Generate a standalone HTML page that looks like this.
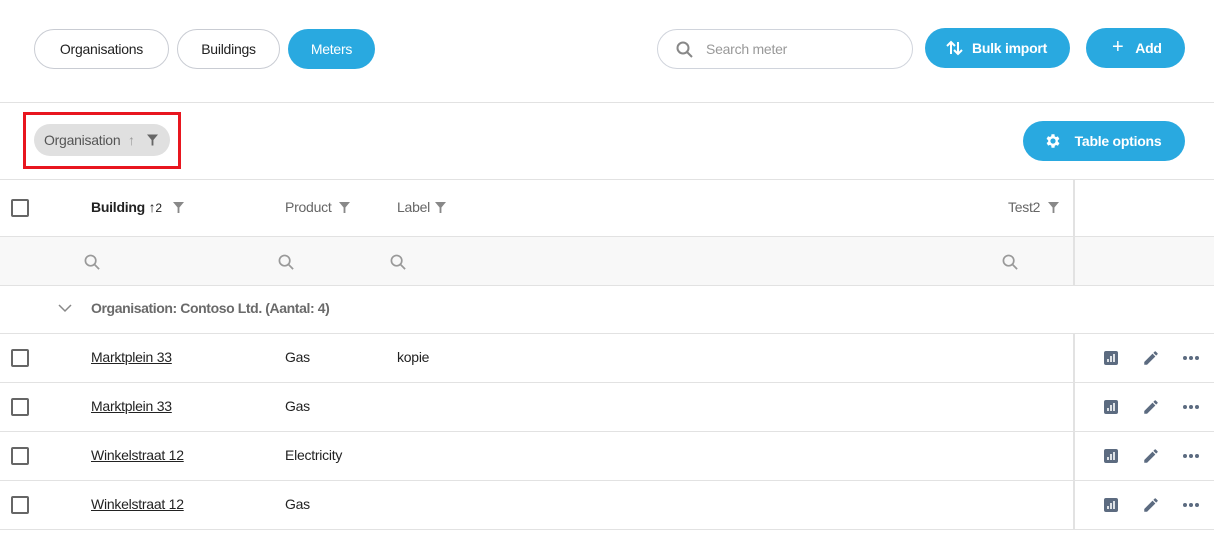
<!DOCTYPE html>
<html><head><style>
*{box-sizing:border-box;margin:0;padding:0}
body{width:1214px;height:533px;background:#fff;font-family:"Liberation Sans",Arial,sans-serif;color:#333;position:relative;overflow:hidden;font-size:14px;letter-spacing:-0.25px}
.abs{position:absolute}
.pill{position:absolute;top:29px;height:40px;border:1px solid #c9ccd3;border-radius:20px;display:flex;align-items:center;justify-content:center;font-size:14px;color:#222}
.blue{background:#29a9e0;color:#fff;border:none;font-weight:bold}
.hl{position:absolute;left:0;width:1214px;height:1px;background:#e2e2e2}
.cb{position:absolute;left:11px;width:18px;height:18px;border:2px solid #666;border-radius:2px}
.t{position:absolute;font-size:14px}
.vl{position:absolute;left:1073px;width:2px;background:#e2e2e2}
a{color:#222;text-decoration:underline}
</style></head><body>
<div class="pill" style="left:34px;width:135px">Organisations</div>
<div class="pill" style="left:177px;width:103px">Buildings</div>
<div class="pill blue" style="left:288px;width:87px;font-weight:normal">Meters</div>
<div class="pill" style="left:657px;width:256px;justify-content:flex-start;padding-left:48px;color:#999;border-color:#d0d4dc">Search meter
<svg class="abs" style="left:18px;top:11px" width="18" height="18" viewBox="0 0 18 18"><circle cx="7" cy="7" r="5.5" fill="none" stroke="#888" stroke-width="2"/><path d="M11 11l5 5" stroke="#888" stroke-width="2"/></svg></div>
<div class="pill blue" style="left:925px;width:145px;top:28px;padding-left:24px">Bulk import
<svg class="abs" style="left:21px;top:12px" width="18" height="16" viewBox="0 0 18 16"><path d="M5 14V2M1 6l4-4 4 4M12 2v12M8 10l4 4 4-4" fill="none" stroke="#fff" stroke-width="2"/></svg></div>
<div class="pill blue" style="left:1086px;width:99px;top:28px;padding-left:26px">Add
<span class="abs" style="left:26px;top:8px;font-size:20px;font-weight:normal">+</span></div>
<div class="hl" style="top:102px"></div>
<div class="abs" style="left:23px;top:112px;width:158px;height:57px;border:3px solid #e8161f"></div>
<div class="abs" style="left:34px;top:124px;width:136px;height:32px;border-radius:16px;background:#e0e0e0;font-size:14px;color:#555;padding:8px 0 0 10px">Organisation <span style="color:#999;margin-left:4px">↑</span>
<svg class="abs" style="left:113px;top:10px" width="11" height="12" viewBox="0 0 12 12"><path d="M0 0h12L7 6v6H5V6z" fill="#666"/></svg></div>
<div class="pill blue" style="left:1023px;top:121px;width:162px;height:40px;padding-left:28px">Table options
<svg class="abs" style="left:21px;top:11px" width="18" height="18" viewBox="0 0 24 24"><path fill="#fff" d="M19.4 13a7.5 7.5 0 000-2l2.1-1.6-2-3.5-2.5 1a7.6 7.6 0 00-1.7-1L15 3h-4l-.4 2.7a7.6 7.6 0 00-1.7 1l-2.5-1-2 3.5L6.6 11a7.5 7.5 0 000 2l-2.1 1.6 2 3.5 2.5-1a7.6 7.6 0 001.7 1L11 21h4l.4-2.7a7.6 7.6 0 001.7-1l2.5 1 2-3.5zM13 15.5a3.5 3.5 0 110-7 3.5 3.5 0 010 7z" transform="translate(-1 0)"/></svg></div>
<div class="hl" style="top:179px"></div>
<div class="vl" style="top:180px;height:106px"></div>
<div class="cb" style="top:199px"></div>
<div class="t" style="left:91px;top:199px;font-weight:bold;color:#222">Building <span style="font-weight:normal">↑<span style="font-size:12px">2</span></span></div>
<div class="t" style="left:285px;top:199px;color:#666">Product</div>
<div class="t" style="left:397px;top:199px;color:#666">Label</div>
<div class="t" style="left:1008px;top:199px;color:#666">Test2</div>
<svg class="abs" style="left:173px;top:202px" width="11" height="11" viewBox="0 0 12 12"><path d="M0 0h12L7 6v6H5V6z" fill="#888"/></svg>
<svg class="abs" style="left:339px;top:202px" width="11" height="11" viewBox="0 0 12 12"><path d="M0 0h12L7 6v6H5V6z" fill="#888"/></svg>
<svg class="abs" style="left:435px;top:202px" width="11" height="11" viewBox="0 0 12 12"><path d="M0 0h12L7 6v6H5V6z" fill="#888"/></svg>
<svg class="abs" style="left:1048px;top:202px" width="11" height="11" viewBox="0 0 12 12"><path d="M0 0h12L7 6v6H5V6z" fill="#888"/></svg>
<div class="hl" style="top:236px"></div>
<div class="abs" style="left:0;top:237px;width:1214px;height:48px;background:#f8f8f8"></div>
<div class="vl" style="top:237px;height:48px"></div>
<svg class="abs" style="left:84px;top:254px" width="17" height="17" viewBox="0 0 18 18"><circle cx="7" cy="7" r="5.5" fill="none" stroke="#999" stroke-width="1.8"/><path d="M11 11l5 5" stroke="#999" stroke-width="1.8"/></svg>
<svg class="abs" style="left:278px;top:254px" width="17" height="17" viewBox="0 0 18 18"><circle cx="7" cy="7" r="5.5" fill="none" stroke="#999" stroke-width="1.8"/><path d="M11 11l5 5" stroke="#999" stroke-width="1.8"/></svg>
<svg class="abs" style="left:390px;top:254px" width="17" height="17" viewBox="0 0 18 18"><circle cx="7" cy="7" r="5.5" fill="none" stroke="#999" stroke-width="1.8"/><path d="M11 11l5 5" stroke="#999" stroke-width="1.8"/></svg>
<svg class="abs" style="left:1002px;top:254px" width="17" height="17" viewBox="0 0 18 18"><circle cx="7" cy="7" r="5.5" fill="none" stroke="#999" stroke-width="1.8"/><path d="M11 11l5 5" stroke="#999" stroke-width="1.8"/></svg>
<div class="hl" style="top:285px"></div>
<svg class="abs" style="left:58px;top:304px" width="14" height="9" viewBox="0 0 14 9"><path d="M1 1l6 6 6-6" fill="none" stroke="#888" stroke-width="1.5"/></svg>
<div class="t" style="left:91px;top:300px;font-weight:bold;color:#6a6a6a;letter-spacing:-0.4px">Organisation: Contoso Ltd. (Aantal: 4)</div>
<div class="hl" style="top:333px"></div>

<div id="rows"></div>
<script>
var d=[["Marktplein 33","Gas","kopie"],["Marktplein 33","Gas",""],["Winkelstraat 12","Electricity",""],["Winkelstraat 12","Gas",""]];
var h="";
d.forEach(function(r,i){var y=334+i*49;
h+='<div class="vl" style="top:'+y+'px;height:48px"></div>';
h+='<div class="cb" style="top:'+(y+15)+'px"></div>';
h+='<div class="t" style="left:91px;top:'+(y+15)+'px"><a>'+r[0]+'</a></div>';
h+='<div class="t" style="left:285px;top:'+(y+15)+'px;color:#222">'+r[1]+'</div>';
h+='<div class="t" style="left:397px;top:'+(y+15)+'px;color:#222">'+r[2]+'</div>';
h+='<svg class="abs" style="left:1104px;top:'+(y+17)+'px" width="14" height="14" viewBox="0 0 14 14"><rect width="14" height="14" rx="2" fill="#5c6b80"/><path d="M4 11V8M7 11V5M10 11V3" stroke="#fff" stroke-width="1.6"/></svg>';
h+='<svg class="abs" style="left:1142px;top:'+(y+15)+'px" width="18" height="18" viewBox="0 0 24 24"><path fill="#5c6b80" d="M3 17.25V21h3.75L17.8 9.94l-3.75-3.75zM20.7 7.04a1 1 0 000-1.41l-2.34-2.34a1 1 0 00-1.41 0l-1.83 1.83 3.75 3.75z"/></svg>';
h+='<svg class="abs" style="left:1182px;top:'+(y+21)+'px" width="18" height="6" viewBox="0 0 18 6"><circle cx="3" cy="3" r="2" fill="#5c6b80"/><circle cx="9" cy="3" r="2" fill="#5c6b80"/><circle cx="15" cy="3" r="2" fill="#5c6b80"/></svg>';
h+='<div class="hl" style="top:'+(y+48)+'px"></div>';});
document.getElementById("rows").innerHTML=h;
</script>
</body></html>
